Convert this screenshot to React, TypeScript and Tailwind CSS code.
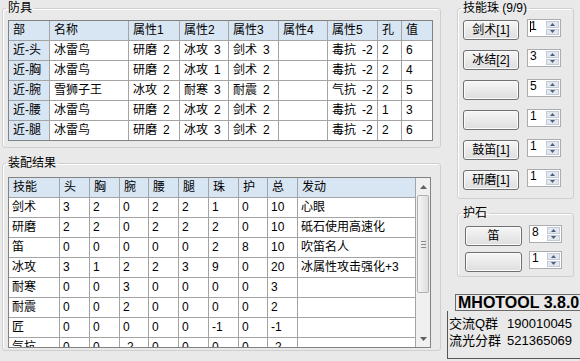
import React from 'react'

const armorHead = ['部', '名称', '属性1', '属性2', '属性3', '属性4', '属性5', '孔', '值']
const armorRows = [
  ['近-头', '冰雷鸟', '研磨\u20022', '冰攻\u20023', '剑术\u20023', '', '毒抗\u2002-2', '2', '6'],
  ['近-胸', '冰雷鸟', '研磨\u20022', '冰攻\u20021', '剑术\u20022', '', '毒抗\u2002-2', '2', '4'],
  ['近-腕', '雪狮子王', '冰攻\u20022', '耐寒\u20023', '耐震\u20022', '', '气抗\u2002-2', '2', '5'],
  ['近-腰', '冰雷鸟', '研磨\u20022', '冰攻\u20022', '剑术\u20022', '', '毒抗\u2002-2', '1', '3'],
  ['近-腿', '冰雷鸟', '研磨\u20022', '冰攻\u20023', '剑术\u20022', '', '毒抗\u2002-2', '2', '6'],
]

const resultHead = ['技能', '头', '胸', '腕', '腰', '腿', '珠', '护', '总', '发动']
const resultRows = [
  ['剑术', '3', '2', '0', '2', '2', '1', '0', '10', '心眼'],
  ['研磨', '2', '2', '0', '2', '2', '2', '0', '10', '砥石使用高速化'],
  ['笛', '0', '0', '0', '0', '0', '2', '8', '10', '吹笛名人'],
  ['冰攻', '3', '1', '2', '2', '3', '9', '0', '20', '冰属性攻击强化+3'],
  ['耐寒', '0', '0', '3', '0', '0', '0', '0', '3', ''],
  ['耐震', '0', '0', '2', '0', '0', '0', '0', '2', ''],
  ['匠', '0', '0', '0', '0', '0', '-1', '0', '-1', ''],
  ['气抗', '0', '0', '-2', '0', '0', '0', '0', '-2', ''],
]

const jewels = [
  { label: '剑术[1]', value: '1', caret: true },
  { label: '冰结[2]', value: '3' },
  { label: '', value: '5' },
  { label: '', value: '1' },
  { label: '鼓笛[1]', value: '1' },
  { label: '研磨[1]', value: '1' },
]

function Tri({ up, color = '#4a5f80', w = 5, h = 3 }: { up?: boolean; color?: string; w?: number; h?: number }) {
  return (
    <svg width={w} height={h} viewBox={`0 0 ${w} ${h}`}>
      <polygon points={up ? `0,${h} ${w / 2},0 ${w},${h}` : `0,0 ${w},0 ${w / 2},${h}`} fill={color} />
    </svg>
  )
}

function Spin({ value, caret, w = 'w-[34px]' }: { value: string; caret?: boolean; w?: string }) {
  return (
    <div className={`${w} h-[18px] -mt-px border border-[#abadb3] bg-white flex`}>
      <div className="flex-1 flex items-start pl-[2px] text-[12px] leading-[13px]">
        {caret && <span className="inline-block w-px h-[11px] bg-black mr-[-1px] mt-px" />}
        {value}
      </div>
      <div className="w-[14px] flex flex-col gap-px py-px pr-px">
        <div className="flex-1 bg-[#e3e8ef] border border-[#c2cbd6] flex items-center justify-center">
          <Tri up />
        </div>
        <div className="flex-1 bg-[#e3e8ef] border border-[#c2cbd6] flex items-center justify-center">
          <Tri />
        </div>
      </div>
    </div>
  )
}

function Btn({ label, w = 'w-[56px]' }: { label: string; w?: string }) {
  return (
    <div className={`${w} h-[20px] shrink-0 rounded-[3px] border border-[#707070] bg-linear-to-b from-[#f6f6f6] to-[#dedede] shadow-[inset_0_0_0_1px_#fbfbfb] flex items-center justify-center text-[12px] leading-none`}>
      {label}
    </div>
  )
}

function Legend({ children }: { children: React.ReactNode }) {
  return <legend className="ml-[3px] px-[2px] text-[12px] leading-[14px]">{children}</legend>
}

export default function App() {
  return (
    <div className="w-[580px] h-[361px] overflow-hidden flex bg-[#e9e9e9] text-black font-['Liberation_Sans','Noto_Sans_CJK_SC',sans-serif]">
      {/* Left column */}
      <div className="w-[441px] shrink-0 flex flex-col pt-px">
        {/* 防具 */}
        <fieldset className="ml-[2px] w-[439px] h-[147px] border border-[#cfcfcf] rounded-[3px] shadow-[inset_1px_1px_0_#fff]">
          <Legend>防具</Legend>
          <div className="mt-[5px] ml-[5px] w-[425px] border border-[#828282]">
            <div className="grid grid-cols-[40px_78px_50px_48px_49px_48px_49px_23px_30px] auto-rows-[19px] gap-px bg-[#a4a4a4]">
              {armorHead.map(h => (
                <div key={h} className="bg-[#d8e5f3] pl-[4px] text-[12px] leading-[19px] whitespace-nowrap">{h}</div>
              ))}
              {armorRows.map((r, i) =>
                r.map((c, j) => (
                  <div
                    key={`${i}-${j}`}
                    className={`${j === 0 ? 'bg-[#d8e5f3]' : 'bg-white'} pl-[4px] text-[12px] leading-[19px] whitespace-pre overflow-hidden`}
                  >
                    {c}
                  </div>
                ))
              )}
            </div>
          </div>
        </fieldset>

        {/* 装配结果 */}
        <fieldset className="mt-[8px] ml-[2px] w-[439px] h-[195px] border border-[#cfcfcf] rounded-[3px] shadow-[inset_1px_1px_0_#fff]">
          <Legend>装配结果</Legend>
          <div className="mt-[7px] ml-[5px] w-[423px] h-[171px] border border-[#828282] flex">
            <div className="w-[406px] h-[169px] overflow-hidden bg-[#a4a4a4]">
              <div className="grid grid-cols-[50px_29px_29px_28px_29px_29px_29px_28px_29px_117px] auto-rows-[19px] gap-px">
                {resultHead.map(h => (
                  <div key={h} className="bg-[#d8e5f3] pl-[4px] text-[12px] leading-[19px] whitespace-nowrap">{h}</div>
                ))}
                {resultRows.map((r, i) =>
                  r.map((c, j) => (
                    <div key={`${i}-${j}`} className="bg-white pl-[3px] text-[12px] leading-[19px] whitespace-nowrap overflow-hidden">
                      {c}
                    </div>
                  ))
                )}
              </div>
            </div>
            {/* scrollbar */}
            <div className="w-[15px] border-l border-[#a4a4a4] bg-[#f0f0f0] flex flex-col items-center">
              <div className="h-[17px] flex items-center justify-center">
                <Tri up color="#606060" w={7} h={4} />
              </div>
              <div className="w-[12px] h-[98px] rounded-[2px] border border-[#b0b0b0] bg-linear-to-r from-[#f5f5f5] to-[#dedede] flex flex-col items-center justify-center gap-[2px]">
                <div className="w-[5px] h-px bg-[#8a8a8a]" />
                <div className="w-[5px] h-px bg-[#8a8a8a]" />
                <div className="w-[5px] h-px bg-[#8a8a8a]" />
              </div>
              <div className="flex-1" />
              <div className="h-[17px] flex items-center justify-center">
                <Tri color="#606060" w={7} h={4} />
              </div>
            </div>
          </div>
        </fieldset>
      </div>

      {/* Right column */}
      <div className="flex-1 flex flex-col pt-px">
        <fieldset className="ml-[16px] w-[117px] border border-[#cfcfcf] rounded-[3px] shadow-[inset_1px_1px_0_#fff] pb-[8px]">
          <Legend>技能珠 (9/9)</Legend>
          <div className="mt-[5px] flex flex-col gap-[10px]">
            {jewels.map((j, i) => (
              <div key={i} className="flex items-start ml-[5px] gap-[8px]">
                <Btn label={j.label} />
                <Spin value={j.value} caret={j.caret} />
              </div>
            ))}
          </div>
        </fieldset>

        <fieldset className="mt-[7px] ml-[16px] w-[117px] border border-[#cfcfcf] rounded-[3px] shadow-[inset_1px_1px_0_#fff] pb-[4px]">
          <Legend>护石</Legend>
          <div className="mt-[6px] flex flex-col gap-[6px]">
            <div className="flex items-start ml-[7px] gap-[7px]">
              <Btn label="笛" w="w-[57px]" />
              <Spin value="8" w="w-[33px]" />
            </div>
            <div className="flex items-start ml-[7px] gap-[7px]">
              <Btn label="" w="w-[57px]" />
              <Spin value="1" w="w-[33px]" />
            </div>
          </div>
        </fieldset>

        <div className="mt-[17px] ml-[14px] w-[130px] h-[17px] shrink-0 border border-[#6a6a6a] pl-[2px] text-[16px] leading-[15px] font-bold whitespace-nowrap">
          MHOTOOL 3.8.0
        </div>
        <div className="ml-[6px] w-[140px] h-[48px] shrink-0 border border-[#555] border-t-0 pt-[4px] pl-px text-[13px] leading-[17px] whitespace-nowrap">
          <div className="flex">
            <span className="w-[58px]">交流Q群</span>
            <span>190010045</span>
          </div>
          <div className="flex">
            <span className="w-[58px]">流光分群</span>
            <span>521365069</span>
          </div>
        </div>
      </div>
    </div>
  )
}
